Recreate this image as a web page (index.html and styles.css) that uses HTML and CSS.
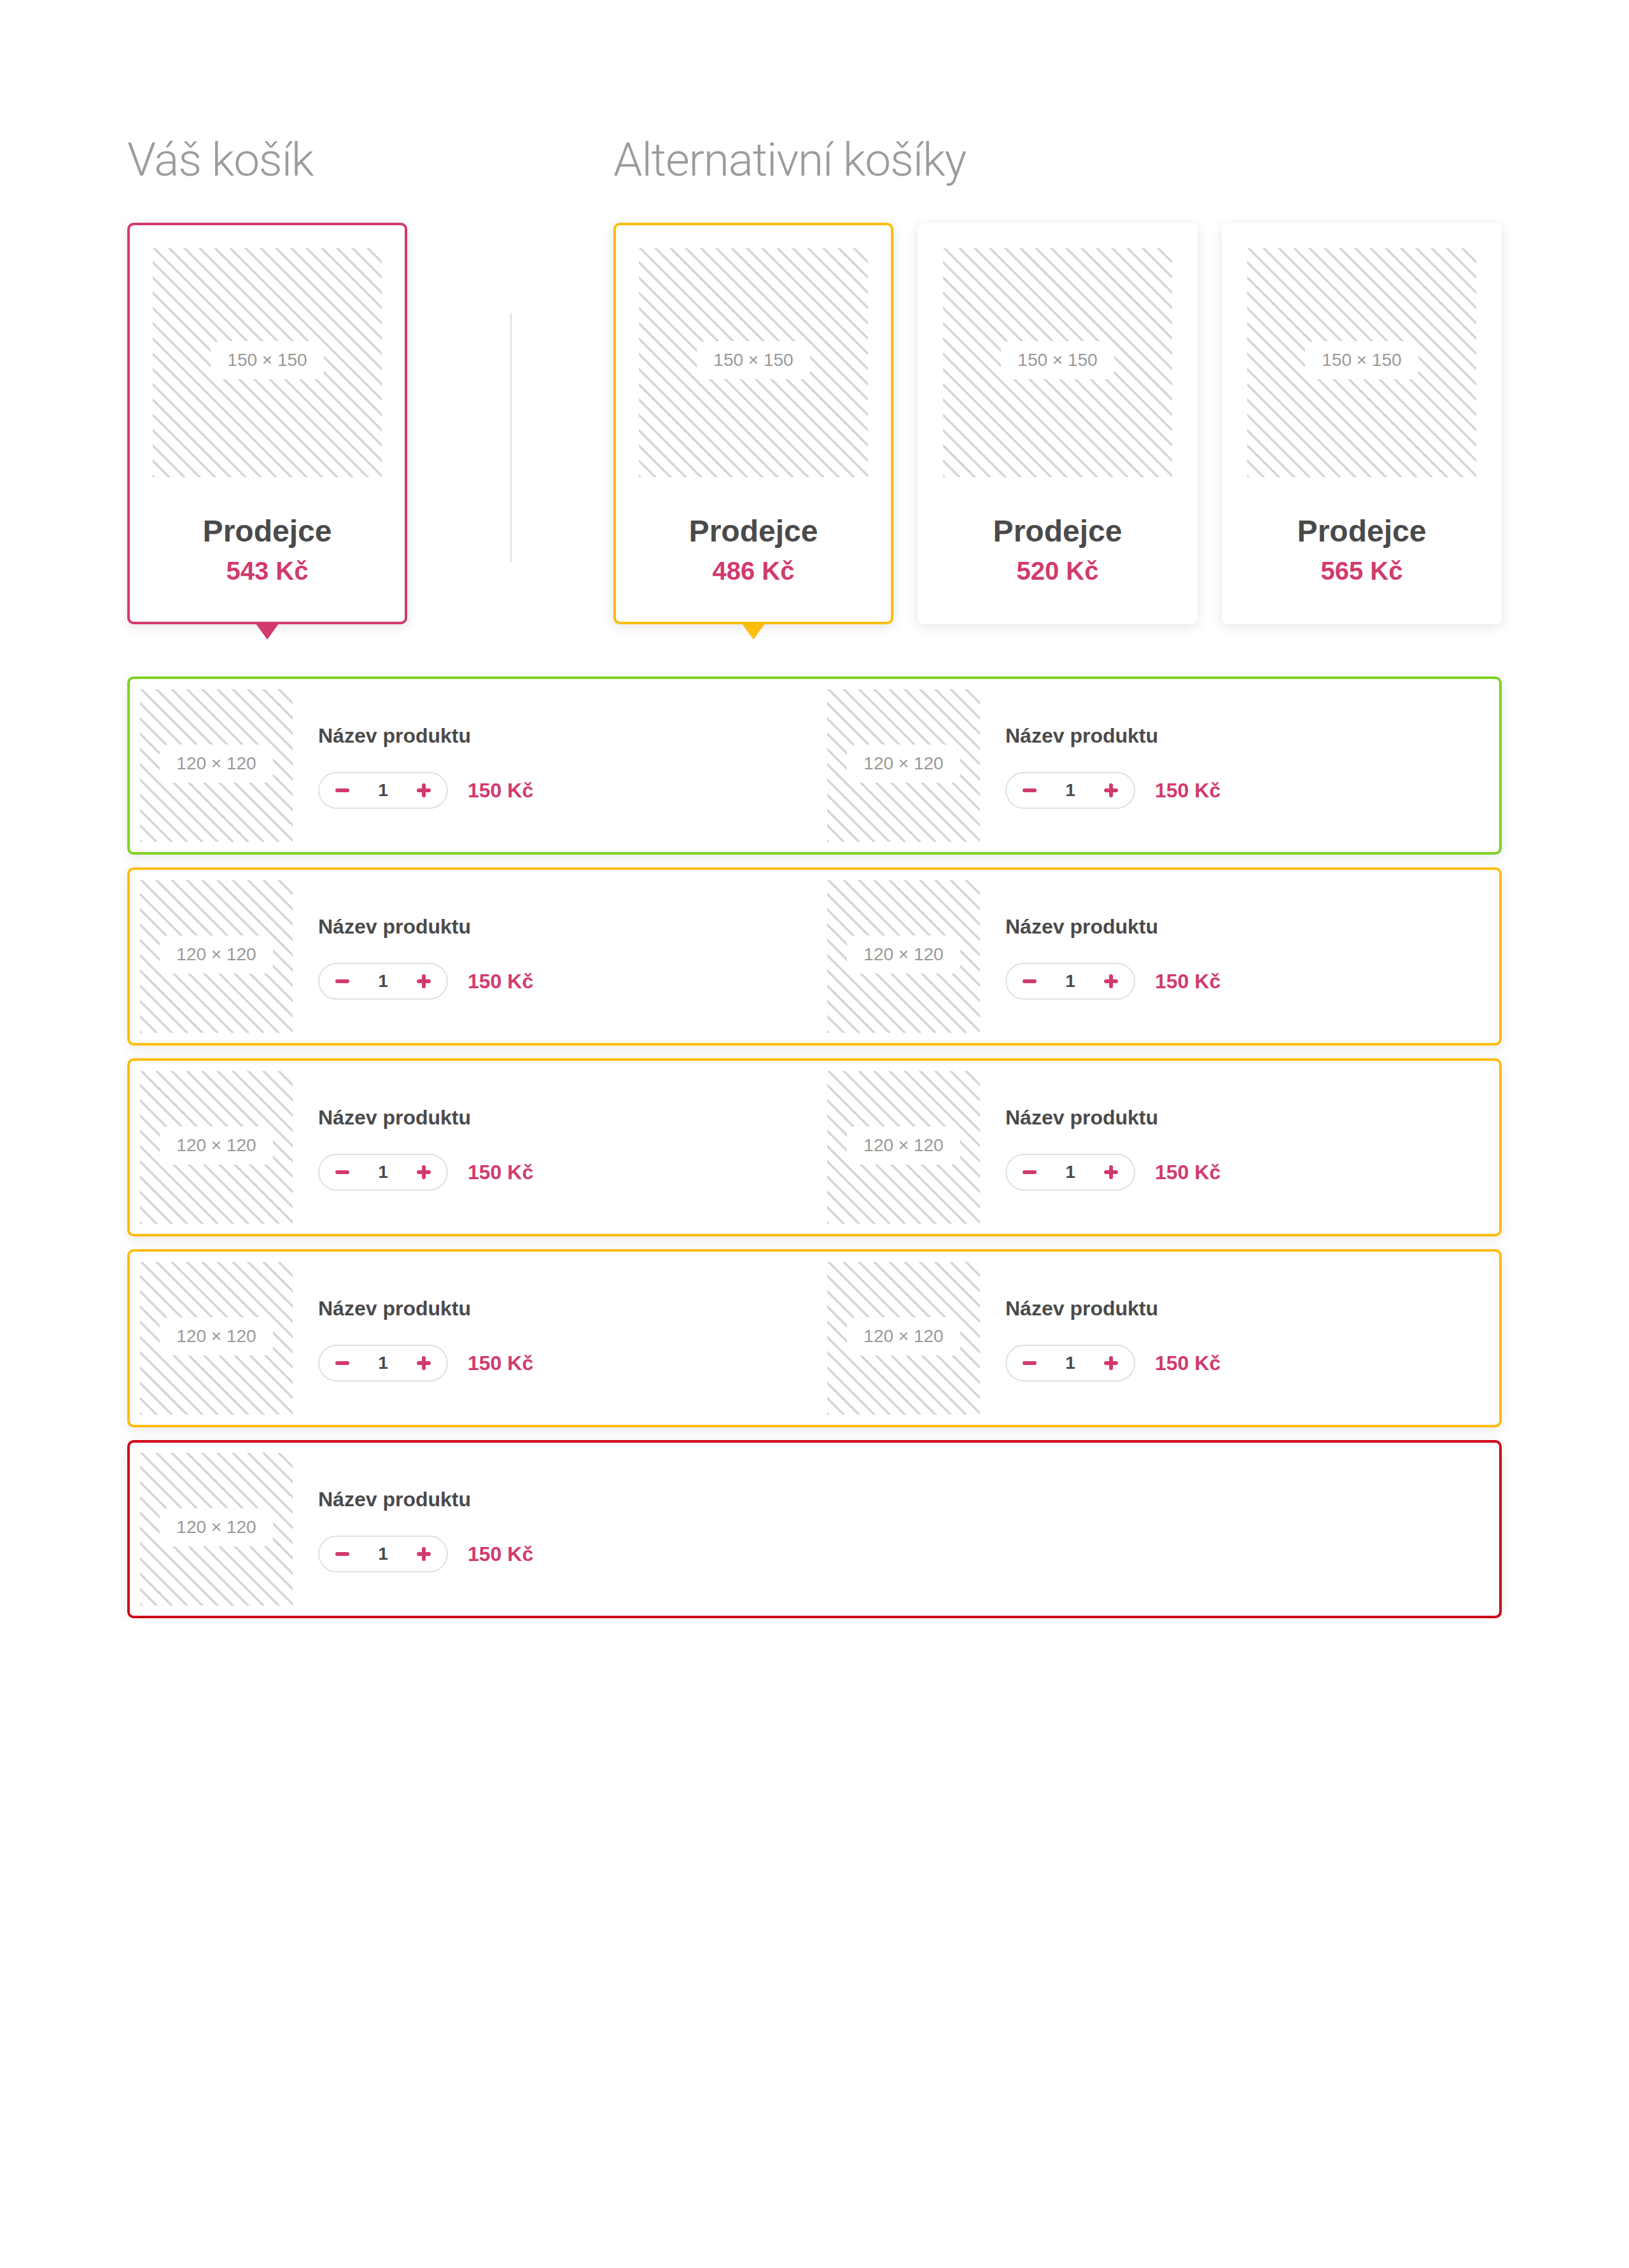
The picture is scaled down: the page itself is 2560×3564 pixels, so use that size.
FILE: index.html
```html
<!DOCTYPE html>
<html lang="cs">
<head>
<meta charset="utf-8">
<title>Košík</title>
<link rel="stylesheet" href="styles.css">
</head>
<body>
<div class="page">
  <section class="top">
    <div class="col-own">
      <h1 class="title">Váš košík</h1>
      <div class="card card-red">
        <div class="ph ph-big"><span class="ph-label">150 × 150</span></div>
        <div class="card-name">Prodejce</div>
        <div class="card-price">543 Kč</div>
        <span class="pointer pointer-red"></span>
      </div>
    </div>
    <div class="divider"></div>
    <div class="col-alt">
      <h1 class="title">Alternativní košíky</h1>
      <div class="cards">
        <div class="card card-yellow">
          <div class="ph ph-big"><span class="ph-label">150 × 150</span></div>
          <div class="card-name">Prodejce</div>
          <div class="card-price">486 Kč</div>
          <span class="pointer pointer-yellow"></span>
        </div>
        <div class="card">
          <div class="ph ph-big"><span class="ph-label">150 × 150</span></div>
          <div class="card-name">Prodejce</div>
          <div class="card-price">520 Kč</div>
        </div>
        <div class="card">
          <div class="ph ph-big"><span class="ph-label">150 × 150</span></div>
          <div class="card-name">Prodejce</div>
          <div class="card-price">565 Kč</div>
        </div>
      </div>
    </div>
  </section>

  <section class="rows">
    <div class="row row-green">
      <div class="item">
        <div class="ph ph-small"><span class="ph-label">120 × 120</span></div>
        <div class="info">
          <div class="name">Název produktu</div>
          <div class="buy">
            <div class="stepper">
              <svg class="ico" width="22" height="22" viewBox="0 0 22 22"><path d="M3 11H19" /></svg>
              <span class="qty">1</span>
              <svg class="ico" width="22" height="22" viewBox="0 0 22 22"><path d="M3 11H19M11 3V19" /></svg>
            </div>
            <span class="price">150 Kč</span>
          </div>
        </div>
      </div>
      <div class="item">
        <div class="ph ph-small"><span class="ph-label">120 × 120</span></div>
        <div class="info">
          <div class="name">Název produktu</div>
          <div class="buy">
            <div class="stepper">
              <svg class="ico" width="22" height="22" viewBox="0 0 22 22"><path d="M3 11H19" /></svg>
              <span class="qty">1</span>
              <svg class="ico" width="22" height="22" viewBox="0 0 22 22"><path d="M3 11H19M11 3V19" /></svg>
            </div>
            <span class="price">150 Kč</span>
          </div>
        </div>
      </div>
    </div>

    <div class="row row-yellow">
      <div class="item">
        <div class="ph ph-small"><span class="ph-label">120 × 120</span></div>
        <div class="info">
          <div class="name">Název produktu</div>
          <div class="buy">
            <div class="stepper">
              <svg class="ico" width="22" height="22" viewBox="0 0 22 22"><path d="M3 11H19" /></svg>
              <span class="qty">1</span>
              <svg class="ico" width="22" height="22" viewBox="0 0 22 22"><path d="M3 11H19M11 3V19" /></svg>
            </div>
            <span class="price">150 Kč</span>
          </div>
        </div>
      </div>
      <div class="item">
        <div class="ph ph-small"><span class="ph-label">120 × 120</span></div>
        <div class="info">
          <div class="name">Název produktu</div>
          <div class="buy">
            <div class="stepper">
              <svg class="ico" width="22" height="22" viewBox="0 0 22 22"><path d="M3 11H19" /></svg>
              <span class="qty">1</span>
              <svg class="ico" width="22" height="22" viewBox="0 0 22 22"><path d="M3 11H19M11 3V19" /></svg>
            </div>
            <span class="price">150 Kč</span>
          </div>
        </div>
      </div>
    </div>

    <div class="row row-yellow">
      <div class="item">
        <div class="ph ph-small"><span class="ph-label">120 × 120</span></div>
        <div class="info">
          <div class="name">Název produktu</div>
          <div class="buy">
            <div class="stepper">
              <svg class="ico" width="22" height="22" viewBox="0 0 22 22"><path d="M3 11H19" /></svg>
              <span class="qty">1</span>
              <svg class="ico" width="22" height="22" viewBox="0 0 22 22"><path d="M3 11H19M11 3V19" /></svg>
            </div>
            <span class="price">150 Kč</span>
          </div>
        </div>
      </div>
      <div class="item">
        <div class="ph ph-small"><span class="ph-label">120 × 120</span></div>
        <div class="info">
          <div class="name">Název produktu</div>
          <div class="buy">
            <div class="stepper">
              <svg class="ico" width="22" height="22" viewBox="0 0 22 22"><path d="M3 11H19" /></svg>
              <span class="qty">1</span>
              <svg class="ico" width="22" height="22" viewBox="0 0 22 22"><path d="M3 11H19M11 3V19" /></svg>
            </div>
            <span class="price">150 Kč</span>
          </div>
        </div>
      </div>
    </div>

    <div class="row row-yellow">
      <div class="item">
        <div class="ph ph-small"><span class="ph-label">120 × 120</span></div>
        <div class="info">
          <div class="name">Název produktu</div>
          <div class="buy">
            <div class="stepper">
              <svg class="ico" width="22" height="22" viewBox="0 0 22 22"><path d="M3 11H19" /></svg>
              <span class="qty">1</span>
              <svg class="ico" width="22" height="22" viewBox="0 0 22 22"><path d="M3 11H19M11 3V19" /></svg>
            </div>
            <span class="price">150 Kč</span>
          </div>
        </div>
      </div>
      <div class="item">
        <div class="ph ph-small"><span class="ph-label">120 × 120</span></div>
        <div class="info">
          <div class="name">Název produktu</div>
          <div class="buy">
            <div class="stepper">
              <svg class="ico" width="22" height="22" viewBox="0 0 22 22"><path d="M3 11H19" /></svg>
              <span class="qty">1</span>
              <svg class="ico" width="22" height="22" viewBox="0 0 22 22"><path d="M3 11H19M11 3V19" /></svg>
            </div>
            <span class="price">150 Kč</span>
          </div>
        </div>
      </div>
    </div>

    <div class="row row-red">
      <div class="item">
        <div class="ph ph-small"><span class="ph-label">120 × 120</span></div>
        <div class="info">
          <div class="name">Název produktu</div>
          <div class="buy">
            <div class="stepper">
              <svg class="ico" width="22" height="22" viewBox="0 0 22 22"><path d="M3 11H19" /></svg>
              <span class="qty">1</span>
              <svg class="ico" width="22" height="22" viewBox="0 0 22 22"><path d="M3 11H19M11 3V19" /></svg>
            </div>
            <span class="price">150 Kč</span>
          </div>
        </div>
      </div>
    </div>
  </section>
</div>
</body>
</html>
```

FILE: styles.css
```css
* { box-sizing: border-box; }

html, body {
  margin: 0;
  padding: 0;
  background: #ffffff;
}

body {
  font-family: "Liberation Sans", Arial, Helvetica, sans-serif;
  color: #4a4a4a;
}

.page {
  width: 2160px;
  margin: 0 auto;
  padding-top: 207px;
}

/* ---------- top section ---------- */
.top {
  display: flex;
  align-items: flex-start;
}

.col-own {
  width: 440px;
  flex: none;
}

.col-alt {
  flex: 1;
}

.title {
  margin: 0 0 55px 0;
  font-family: Roboto, "Liberation Sans", sans-serif;
  font-weight: 300;
  font-size: 73px;
  line-height: 88px;
  letter-spacing: -1.2px;
  color: #9b9b9b;
  white-space: nowrap;
}

.divider {
  flex: none;
  width: 2px;
  height: 391px;
  margin: 285px 160px 0 162px;
  background: #dddddd;
}

.cards {
  display: flex;
  gap: 38px;
}

.card {
  position: relative;
  width: 440px;
  flex: none;
  background: #ffffff;
  border: 4px solid #ffffff;
  border-radius: 10px;
  padding: 36px 36px 56px;
  box-shadow: 0 4px 18px rgba(0, 0, 0, 0.11);
  text-align: center;
}

.card-red { border-color: #d13a6c; }
.card-yellow { border-color: #fcbd0c; }

.card-name {
  margin-top: 55px;
  font-weight: 700;
  font-size: 48px;
  line-height: 60px;
  color: #4a4a4a;
}

.card-price {
  margin-top: 8px;
  font-weight: 700;
  font-size: 40px;
  line-height: 48px;
  color: #d13a6c;
}

.pointer {
  position: absolute;
  left: 50%;
  top: calc(100% + 3px);
  margin-left: -18px;
  width: 0;
  height: 0;
  border-left: 18px solid transparent;
  border-right: 18px solid transparent;
  border-top: 25px solid #d13a6c;
}

.pointer-red { border-top-color: #d13a6c; }
.pointer-yellow { border-top-color: #fcbd0c; }

/* ---------- placeholders ---------- */
.ph {
  display: flex;
  align-items: center;
  justify-content: center;
  flex: none;
  background-color: #ffffff;
  background-image: repeating-linear-gradient(45deg,
    #d6d6d6 0px, #d6d6d6 3.4px,
    rgba(255, 255, 255, 0) 3.4px, rgba(255, 255, 255, 0) 16.97px);
}

.ph-big {
  width: 360px;
  height: 360px;
}

.ph-small {
  width: 240px;
  height: 240px;
}

.ph-label {
  margin-bottom: 8px;
  background: #ffffff;
  border-radius: 14px;
  padding: 14px 26px;
  font-size: 28px;
  line-height: 32px;
  color: #999999;
  white-space: nowrap;
}

.ph-small .ph-label {
  margin-bottom: 6px;
}

/* ---------- product rows ---------- */
.rows {
  margin-top: 82px;
  display: flex;
  flex-direction: column;
  gap: 20px;
}

.row {
  display: grid;
  grid-template-columns: 1fr 1fr;
  column-gap: 40px;
  border: 4px solid #fcbd0c;
  border-radius: 10px;
  padding: 16px;
  background: #ffffff;
  box-shadow: 0 4px 18px rgba(0, 0, 0, 0.09);
}

.row-green { border-color: #7ed321; }
.row-yellow { border-color: #fcbd0c; }
.row-red { border-color: #d0021b; }

.item {
  display: flex;
  align-items: center;
  gap: 40px;
}

.info {
  display: flex;
  flex-direction: column;
  align-items: flex-start;
}

.name {
  font-weight: 700;
  font-size: 32px;
  line-height: 40px;
  color: #4a4a4a;
}

.buy {
  margin-top: 37px;
  display: flex;
  align-items: center;
  gap: 31px;
}

.stepper {
  display: flex;
  align-items: center;
  justify-content: space-between;
  width: 204px;
  height: 58px;
  padding: 0 25px;
  border: 2px solid #e1e1e1;
  border-radius: 29px;
}

.ico {
  display: block;
  fill: none;
  stroke: #d13a6c;
  stroke-width: 6;
  stroke-linecap: round;
}

.qty {
  font-weight: 700;
  font-size: 28px;
  line-height: 32px;
  color: #4a4a4a;
}

.price {
  font-weight: 700;
  font-size: 32px;
  line-height: 40px;
  color: #d13a6c;
}
```
